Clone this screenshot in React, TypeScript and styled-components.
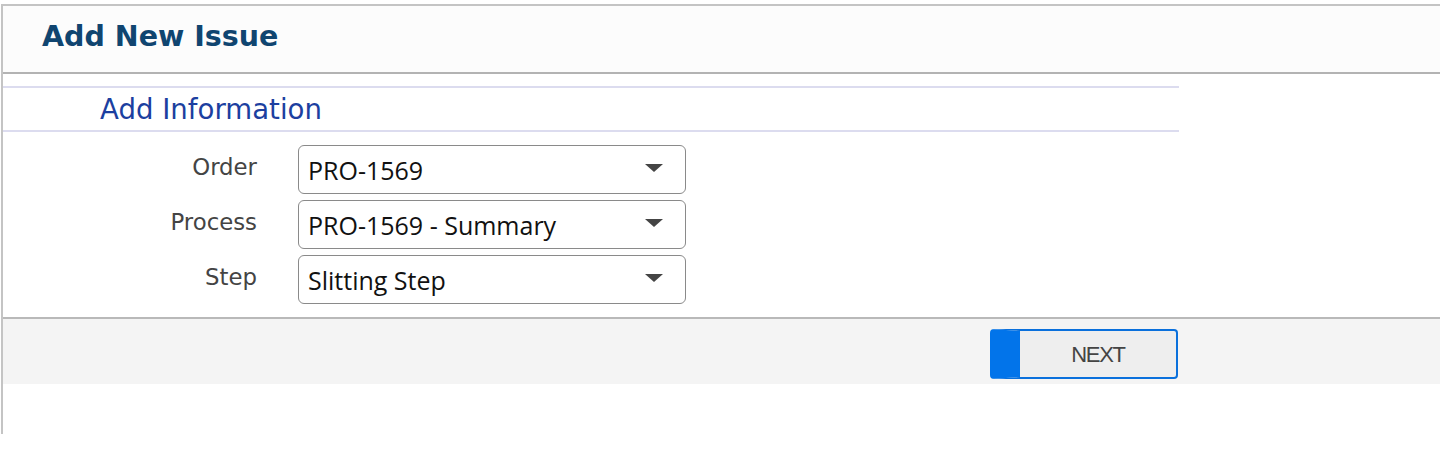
import React from "react";
import styled, { createGlobalStyle } from "styled-components";

const Global = createGlobalStyle`
  html, body { margin: 0; padding: 0; background: #ffffff; }
  body { font-family: "DejaVu Sans", "Open Sans", sans-serif; }
  * { box-sizing: border-box; }
`;

const Frame = styled.div`
  margin: 4px 0 0 1px;
  width: 1439px;
  height: 430px;
  border-top: 2px solid #c4c4c4;
  border-left: 2px solid #c4c4c4;
  display: flex;
  flex-direction: column;
`;

const Header = styled.header`
  height: 68px;
  background: #fcfcfc;
  border-bottom: 2px solid #b3b3b3;
  display: flex;
  align-items: center;
  padding-left: 39px;
  padding-bottom: 6px;
`;

const Title = styled.h1`
  margin: 0;
  font-family: "DejaVu Sans", "Open Sans", sans-serif;
  font-weight: 700;
  font-size: 28.5px;
  color: #104570;
`;

const Section = styled.section`
  margin-top: 12px;
  width: 1176px;
  height: 46px;
  border-top: 2px solid #dcdcef;
  border-bottom: 2px solid #dcdcef;
  display: flex;
  align-items: center;
  padding-left: 97px;
`;

const SectionTitle = styled.h2`
  margin: 0;
  font-family: "DejaVu Sans", "Open Sans", sans-serif;
  font-weight: 400;
  font-size: 27.6px;
  color: #1c3fa0;
`;

const Form = styled.div`
  padding-top: 13px;
  display: grid;
  grid-template-columns: 254px 388px;
  column-gap: 41px;
  row-gap: 6px;
  align-items: center;
`;

const Label = styled.label`
  text-align: right;
  font-family: "DejaVu Sans", "Open Sans", sans-serif;
  font-size: 22.8px;
  color: #444;
  align-self: start;
  padding-top: 9px;
`;

const Select = styled.div`
  height: 49px;
  border: 1.5px solid #8a8a8a;
  border-radius: 6px;
  background: #fff;
  display: flex;
  align-items: center;
  justify-content: space-between;
  padding: 0 22px 0 9px;
  font-family: "Open Sans", "DejaVu Sans", sans-serif;
  font-size: 25px;
  color: #111;
`;

const Arrow = styled.span`
  width: 0;
  height: 0;
  border-left: 9px solid transparent;
  border-right: 9px solid transparent;
  border-top: 8px solid #444;
  margin-top: -4px;
`;

const Footer = styled.footer`
  margin-top: 13px;
  height: 67px;
  border-top: 2px solid #b9b9b9;
  background: #f4f4f4;
  display: flex;
  align-items: flex-start;
  padding: 10px 0 0 987px;
`;

const Button = styled.button`
  width: 188px;
  height: 50px;
  border: 2px solid #0a70dc;
  border-left: 30px solid #0274ea;
  border-radius: 4px;
  background: #eeeeee;
  font-family: "Liberation Sans", Arial, sans-serif;
  font-size: 22px;
  letter-spacing: -1.3px;
  color: #444;
  padding: 2px 0 0;
  cursor: pointer;
`;

const fields = [
  { label: "Order", value: "PRO-1569" },
  { label: "Process", value: "PRO-1569 - Summary" },
  { label: "Step", value: "Slitting Step" },
];

export default function App() {
  return (
    <>
      <Global />
      <Frame>
        <Header>
          <Title>Add New Issue</Title>
        </Header>
        <Section>
          <SectionTitle>Add Information</SectionTitle>
        </Section>
        <Form>
          {fields.map((f) => (
            <React.Fragment key={f.label}>
              <Label>{f.label}</Label>
              <Select>
                <span>{f.value}</span>
                <Arrow />
              </Select>
            </React.Fragment>
          ))}
        </Form>
        <Footer>
          <Button>NEXT</Button>
        </Footer>
      </Frame>
    </>
  );
}
